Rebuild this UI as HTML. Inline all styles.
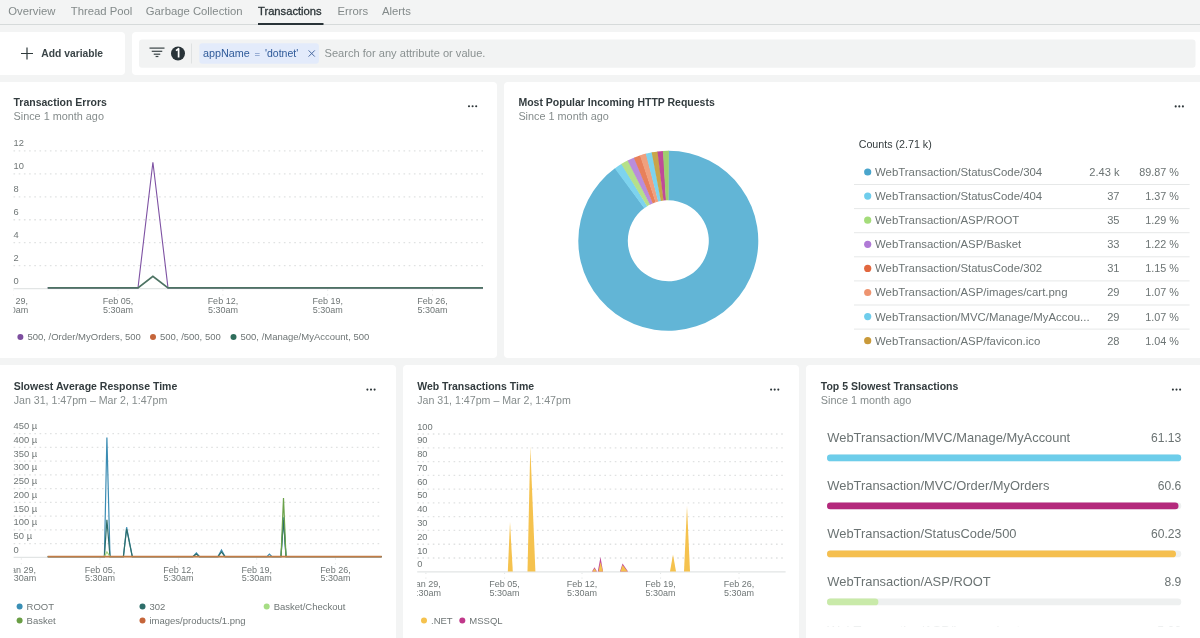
<!DOCTYPE html>
<html><head><meta charset="utf-8"><style>
html,body{margin:0;padding:0;width:1200px;height:638px;overflow:hidden;background:#f3f4f4;}
svg{display:block;font-family:"Liberation Sans", sans-serif;will-change:transform;}
</style></head><body>
<svg width="1200" height="638" viewBox="0 0 1200 638">
<rect x="0" y="0" width="1200" height="638" rx="0" fill="#f3f4f4" />
<text x="8.3" y="15.4" font-size="11.3" fill="#838a8a" text-anchor="start" >Overview</text>
<text x="70.8" y="15.4" font-size="11.3" fill="#838a8a" text-anchor="start" >Thread Pool</text>
<text x="145.8" y="15.4" font-size="11.3" fill="#838a8a" text-anchor="start" >Garbage Collection</text>
<text x="258" y="15.4" font-size="11.2" fill="#2c3538" text-anchor="start" stroke="#2c3538" stroke-width="0.3">Transactions</text>
<text x="337.5" y="15.4" font-size="11.3" fill="#838a8a" text-anchor="start" >Errors</text>
<text x="382" y="15.4" font-size="11.3" fill="#838a8a" text-anchor="start" >Alerts</text>
<rect x="0" y="24" width="1200" height="1" rx="0" fill="#d6dada" />
<rect x="258" y="23" width="65.5" height="2" rx="0" fill="#293338" />
<rect x="-5" y="32" width="130" height="43" rx="4" fill="#fff" />
<path d="M21 53.5H33M27 47.5V59.5" stroke="#2f3a3c" stroke-width="1.2" fill="none"/>
<text x="41.3" y="57" font-size="10.3" fill="#3b4548" font-weight="700" text-anchor="start" >Add variable</text>
<rect x="132" y="32" width="1075" height="43" rx="4" fill="#fff" />
<rect x="139" y="39.5" width="1056.5" height="28.3" rx="3" fill="#f2f3f3" />
<rect x="149.5" y="47.5" width="15" height="1.2" rx="0" fill="#3a4446" />
<rect x="151.75" y="50.699999999999996" width="10.5" height="1.2" rx="0" fill="#3a4446" />
<rect x="153.75" y="53.6" width="6.5" height="1.2" rx="0" fill="#3a4446" />
<rect x="155.6" y="55.9" width="2.8" height="1.2" rx="0" fill="#3a4446" />
<circle cx="178" cy="53.5" r="7" fill="#293338"/>
<path d="M176 50.6L178.6 48.7V57.6" stroke="#fff" stroke-width="1.7" fill="none" stroke-linejoin="round"/>
<rect x="191" y="43.5" width="1" height="20" rx="0" fill="#dfe2e2" />
<rect x="199.3" y="43.3" width="119.6" height="20.5" rx="3" fill="#e3ebfb" />
<text x="203" y="56.8" font-size="10.8" fill="#2f5a99" text-anchor="start" >appName</text>
<text x="254.6" y="56.5" font-size="9.6" fill="#5476b0" text-anchor="start" >=</text>
<text x="265" y="56.8" font-size="10.5" fill="#2f5a99" text-anchor="start" >'dotnet'</text>
<path d="M308.6 50.4L314.8 56.6M314.8 50.4L308.6 56.6" stroke="#4a6aa0" stroke-width="1" fill="none"/>
<text x="324.5" y="56.8" font-size="11.1" fill="#8a9191" text-anchor="start" >Search for any attribute or value.</text>
<rect x="-4" y="82" width="501" height="276" rx="4" fill="#fff" />
<rect x="504" y="82" width="700" height="276" rx="4" fill="#fff" />
<rect x="-4" y="365" width="400" height="280" rx="4" fill="#fff" />
<rect x="403" y="365" width="396" height="280" rx="4" fill="#fff" />
<rect x="806" y="365" width="400" height="280" rx="4" fill="#fff" />
<text x="13.5" y="106" font-size="10.5" fill="#333c3f" font-weight="700" text-anchor="start" >Transaction Errors</text>
<text x="13.5" y="120.2" font-size="10.85" fill="#858c8c" text-anchor="start" >Since 1 month ago</text>
<text x="518.4" y="106" font-size="10.5" fill="#333c3f" font-weight="700" text-anchor="start" >Most Popular Incoming HTTP Requests</text>
<text x="518.4" y="120.2" font-size="10.85" fill="#858c8c" text-anchor="start" >Since 1 month ago</text>
<text x="13.7" y="389.7" font-size="10.5" fill="#333c3f" font-weight="700" text-anchor="start" >Slowest Average Response Time</text>
<text x="13.7" y="403.9" font-size="10.64" fill="#858c8c" text-anchor="start" >Jan 31, 1:47pm – Mar 2, 1:47pm</text>
<text x="417.2" y="389.7" font-size="10.5" fill="#333c3f" font-weight="700" text-anchor="start" >Web Transactions Time</text>
<text x="417.2" y="403.9" font-size="10.64" fill="#858c8c" text-anchor="start" >Jan 31, 1:47pm – Mar 2, 1:47pm</text>
<text x="820.8" y="389.7" font-size="10.5" fill="#333c3f" font-weight="700" text-anchor="start" >Top 5 Slowest Transactions</text>
<text x="820.8" y="403.9" font-size="10.85" fill="#858c8c" text-anchor="start" >Since 1 month ago</text>
<circle cx="469.0" cy="106.2" r="1.05" fill="#2d3639"/>
<circle cx="472.6" cy="106.2" r="1.05" fill="#2d3639"/>
<circle cx="476.20000000000005" cy="106.2" r="1.05" fill="#2d3639"/>
<circle cx="1175.7" cy="106.4" r="1.05" fill="#2d3639"/>
<circle cx="1179.3" cy="106.4" r="1.05" fill="#2d3639"/>
<circle cx="1182.8999999999999" cy="106.4" r="1.05" fill="#2d3639"/>
<circle cx="367.4" cy="389.6" r="1.05" fill="#2d3639"/>
<circle cx="371" cy="389.6" r="1.05" fill="#2d3639"/>
<circle cx="374.6" cy="389.6" r="1.05" fill="#2d3639"/>
<circle cx="771.1" cy="389.6" r="1.05" fill="#2d3639"/>
<circle cx="774.7" cy="389.6" r="1.05" fill="#2d3639"/>
<circle cx="778.3000000000001" cy="389.6" r="1.05" fill="#2d3639"/>
<circle cx="1172.9" cy="389.6" r="1.05" fill="#2d3639"/>
<circle cx="1176.5" cy="389.6" r="1.05" fill="#2d3639"/>
<circle cx="1180.1" cy="389.6" r="1.05" fill="#2d3639"/>
<line x1="13.5" y1="150.9" x2="483" y2="150.9" stroke="#e0e2e2" stroke-width="1.3" stroke-dasharray="1.6 3.6"/>
<text x="13.5" y="146.4" font-size="9.3" fill="#6f7676" text-anchor="start" >12</text>
<line x1="13.5" y1="173.85000000000002" x2="483" y2="173.85000000000002" stroke="#e0e2e2" stroke-width="1.3" stroke-dasharray="1.6 3.6"/>
<text x="13.5" y="169.35000000000002" font-size="9.3" fill="#6f7676" text-anchor="start" >10</text>
<line x1="13.5" y1="196.8" x2="483" y2="196.8" stroke="#e0e2e2" stroke-width="1.3" stroke-dasharray="1.6 3.6"/>
<text x="13.5" y="192.3" font-size="9.3" fill="#6f7676" text-anchor="start" >8</text>
<line x1="13.5" y1="219.75" x2="483" y2="219.75" stroke="#e0e2e2" stroke-width="1.3" stroke-dasharray="1.6 3.6"/>
<text x="13.5" y="215.25" font-size="9.3" fill="#6f7676" text-anchor="start" >6</text>
<line x1="13.5" y1="242.70000000000002" x2="483" y2="242.70000000000002" stroke="#e0e2e2" stroke-width="1.3" stroke-dasharray="1.6 3.6"/>
<text x="13.5" y="238.20000000000002" font-size="9.3" fill="#6f7676" text-anchor="start" >4</text>
<line x1="13.5" y1="265.65000000000003" x2="483" y2="265.65000000000003" stroke="#e0e2e2" stroke-width="1.3" stroke-dasharray="1.6 3.6"/>
<text x="13.5" y="261.15000000000003" font-size="9.3" fill="#6f7676" text-anchor="start" >2</text>
<text x="13.5" y="284.1" font-size="9.3" fill="#6f7676" text-anchor="start" >0</text>
<line x1="13.5" y1="288.6" x2="483" y2="288.6" stroke="#e2e5e5" stroke-width="1.2"/>
<clipPath id="c13_288"><rect x="13.5" y="288.6" width="489.5" height="40"/></clipPath>
<g clip-path="url(#c13_288)">
<line x1="13.2" y1="289.6" x2="13.2" y2="295.6" stroke="#e3e5e5" stroke-width="1" stroke-dasharray="1.2 3.5"/>
<text x="13.2" y="303.70000000000005" font-size="9" fill="#6f7676" text-anchor="middle" >Jan 29,</text>
<text x="13.2" y="312.6" font-size="9" fill="#6f7676" text-anchor="middle" >5:30am</text>
<line x1="118" y1="289.6" x2="118" y2="295.6" stroke="#e3e5e5" stroke-width="1" stroke-dasharray="1.2 3.5"/>
<text x="118" y="303.70000000000005" font-size="9" fill="#6f7676" text-anchor="middle" >Feb 05,</text>
<text x="118" y="312.6" font-size="9" fill="#6f7676" text-anchor="middle" >5:30am</text>
<line x1="222.9" y1="289.6" x2="222.9" y2="295.6" stroke="#e3e5e5" stroke-width="1" stroke-dasharray="1.2 3.5"/>
<text x="222.9" y="303.70000000000005" font-size="9" fill="#6f7676" text-anchor="middle" >Feb 12,</text>
<text x="222.9" y="312.6" font-size="9" fill="#6f7676" text-anchor="middle" >5:30am</text>
<line x1="327.7" y1="289.6" x2="327.7" y2="295.6" stroke="#e3e5e5" stroke-width="1" stroke-dasharray="1.2 3.5"/>
<text x="327.7" y="303.70000000000005" font-size="9" fill="#6f7676" text-anchor="middle" >Feb 19,</text>
<text x="327.7" y="312.6" font-size="9" fill="#6f7676" text-anchor="middle" >5:30am</text>
<line x1="432.6" y1="289.6" x2="432.6" y2="295.6" stroke="#e3e5e5" stroke-width="1" stroke-dasharray="1.2 3.5"/>
<text x="432.6" y="303.70000000000005" font-size="9" fill="#6f7676" text-anchor="middle" >Feb 26,</text>
<text x="432.6" y="312.6" font-size="9" fill="#6f7676" text-anchor="middle" >5:30am</text>
</g>
<polyline points="47.7,287.9 138,287.9 152.9,162.3 168,287.9 483,287.9" fill="none" stroke="#7e52a3" stroke-width="1.1"/>
<polyline points="47.7,287.9 138,287.9 152.9,276.4 168,287.9 483,287.9" fill="none" stroke="#4d7363" stroke-width="1.8"/>
<circle cx="20.4" cy="336.9" r="3" fill="#7d4e9f"/>
<text x="27.4" y="340.2" font-size="9.5" fill="#6f7676" text-anchor="start" >500, /Order/MyOrders, 500</text>
<circle cx="153" cy="336.9" r="3" fill="#c5653a"/>
<text x="160" y="340.2" font-size="9.5" fill="#6f7676" text-anchor="start" >500, /500, 500</text>
<circle cx="233.5" cy="336.9" r="3" fill="#2f6e5c"/>
<text x="240.5" y="340.2" font-size="9.5" fill="#6f7676" text-anchor="start" >500, /Manage/MyAccount, 500</text>
<line x1="13.6" y1="433.7" x2="381.7" y2="433.7" stroke="#e0e2e2" stroke-width="1.3" stroke-dasharray="1.6 3.6"/>
<text x="13.6" y="429.2" font-size="9.4" fill="#6f7676" text-anchor="start" >450 µ</text>
<line x1="13.6" y1="447.44444444444446" x2="381.7" y2="447.44444444444446" stroke="#e0e2e2" stroke-width="1.3" stroke-dasharray="1.6 3.6"/>
<text x="13.6" y="442.94444444444446" font-size="9.4" fill="#6f7676" text-anchor="start" >400 µ</text>
<line x1="13.6" y1="461.18888888888887" x2="381.7" y2="461.18888888888887" stroke="#e0e2e2" stroke-width="1.3" stroke-dasharray="1.6 3.6"/>
<text x="13.6" y="456.68888888888887" font-size="9.4" fill="#6f7676" text-anchor="start" >350 µ</text>
<line x1="13.6" y1="474.93333333333334" x2="381.7" y2="474.93333333333334" stroke="#e0e2e2" stroke-width="1.3" stroke-dasharray="1.6 3.6"/>
<text x="13.6" y="470.43333333333334" font-size="9.4" fill="#6f7676" text-anchor="start" >300 µ</text>
<line x1="13.6" y1="488.67777777777775" x2="381.7" y2="488.67777777777775" stroke="#e0e2e2" stroke-width="1.3" stroke-dasharray="1.6 3.6"/>
<text x="13.6" y="484.17777777777775" font-size="9.4" fill="#6f7676" text-anchor="start" >250 µ</text>
<line x1="13.6" y1="502.4222222222222" x2="381.7" y2="502.4222222222222" stroke="#e0e2e2" stroke-width="1.3" stroke-dasharray="1.6 3.6"/>
<text x="13.6" y="497.9222222222222" font-size="9.4" fill="#6f7676" text-anchor="start" >200 µ</text>
<line x1="13.6" y1="516.1666666666666" x2="381.7" y2="516.1666666666666" stroke="#e0e2e2" stroke-width="1.3" stroke-dasharray="1.6 3.6"/>
<text x="13.6" y="511.66666666666663" font-size="9.4" fill="#6f7676" text-anchor="start" >150 µ</text>
<line x1="13.6" y1="529.911111111111" x2="381.7" y2="529.911111111111" stroke="#e0e2e2" stroke-width="1.3" stroke-dasharray="1.6 3.6"/>
<text x="13.6" y="525.411111111111" font-size="9.4" fill="#6f7676" text-anchor="start" >100 µ</text>
<line x1="13.6" y1="543.6555555555556" x2="381.7" y2="543.6555555555556" stroke="#e0e2e2" stroke-width="1.3" stroke-dasharray="1.6 3.6"/>
<text x="13.6" y="539.1555555555556" font-size="9.4" fill="#6f7676" text-anchor="start" >50 µ</text>
<text x="13.6" y="552.9" font-size="9.4" fill="#6f7676" text-anchor="start" >0</text>
<line x1="13.6" y1="557.4" x2="381.7" y2="557.4" stroke="#e2e5e5" stroke-width="1.2"/>
<clipPath id="c13_557"><rect x="13.6" y="557.4" width="388.09999999999997" height="40"/></clipPath>
<g clip-path="url(#c13_557)">
<line x1="21.3" y1="558.4" x2="21.3" y2="564.4" stroke="#e3e5e5" stroke-width="1" stroke-dasharray="1.2 3.5"/>
<text x="21.3" y="572.5" font-size="9" fill="#6f7676" text-anchor="middle" >Jan 29,</text>
<text x="21.3" y="581.4" font-size="9" fill="#6f7676" text-anchor="middle" >5:30am</text>
<line x1="100" y1="558.4" x2="100" y2="564.4" stroke="#e3e5e5" stroke-width="1" stroke-dasharray="1.2 3.5"/>
<text x="100" y="572.5" font-size="9" fill="#6f7676" text-anchor="middle" >Feb 05,</text>
<text x="100" y="581.4" font-size="9" fill="#6f7676" text-anchor="middle" >5:30am</text>
<line x1="178.6" y1="558.4" x2="178.6" y2="564.4" stroke="#e3e5e5" stroke-width="1" stroke-dasharray="1.2 3.5"/>
<text x="178.6" y="572.5" font-size="9" fill="#6f7676" text-anchor="middle" >Feb 12,</text>
<text x="178.6" y="581.4" font-size="9" fill="#6f7676" text-anchor="middle" >5:30am</text>
<line x1="256.7" y1="558.4" x2="256.7" y2="564.4" stroke="#e3e5e5" stroke-width="1" stroke-dasharray="1.2 3.5"/>
<text x="256.7" y="572.5" font-size="9" fill="#6f7676" text-anchor="middle" >Feb 19,</text>
<text x="256.7" y="581.4" font-size="9" fill="#6f7676" text-anchor="middle" >5:30am</text>
<line x1="335.4" y1="558.4" x2="335.4" y2="564.4" stroke="#e3e5e5" stroke-width="1" stroke-dasharray="1.2 3.5"/>
<text x="335.4" y="572.5" font-size="9" fill="#6f7676" text-anchor="middle" >Feb 26,</text>
<text x="335.4" y="581.4" font-size="9" fill="#6f7676" text-anchor="middle" >5:30am</text>
</g>
<polyline points="47.7,556.6 104.4,556.6 106.9,437.4 110,556.6 123.4,556.6 126.6,527.2 132.3,556.6 193,556.6 196.4,553 199.5,556.6 218,556.6 221.5,550 225,556.6 267,556.6 269.4,554 272,556.6 281,556.6 283.5,517.3 286,556.6 381.7,556.6" fill="none" stroke="#3b8cb3" stroke-width="1.2"/>
<polyline points="47.7,556.6 104.4,556.6 106.9,519.8 110,556.6 123.4,556.6 126.6,529 132.3,556.6 193,556.6 196.4,554 199.5,556.6 218,556.6 221.5,552 225,556.6 281,556.6 283.5,520 286,556.6 381.7,556.6" fill="none" stroke="#2e6e6a" stroke-width="1.2"/>
<polyline points="281,556.6 283.5,498.1 286,556.6" fill="none" stroke="#6aa24a" stroke-width="1.2"/>
<polyline points="104.4,556.6 106.9,552 110,556.6" fill="none" stroke="#a6d87f" stroke-width="1.2"/>
<polyline points="47.7,556.6 381.7,556.6" fill="none" stroke="#c27c45" stroke-width="1.8"/>
<circle cx="19.6" cy="606.6" r="3" fill="#3a8fb5"/>
<text x="26.6" y="609.9" font-size="9.5" fill="#6f7676" text-anchor="start" >ROOT</text>
<circle cx="142.5" cy="606.6" r="3" fill="#2e6e6a"/>
<text x="149.5" y="609.9" font-size="9.5" fill="#6f7676" text-anchor="start" >302</text>
<circle cx="266.7" cy="606.6" r="3" fill="#a6dd84"/>
<text x="273.7" y="609.9" font-size="9.5" fill="#6f7676" text-anchor="start" >Basket/Checkout</text>
<circle cx="19.6" cy="620.6" r="3" fill="#6a9e45"/>
<text x="26.6" y="623.9" font-size="9.5" fill="#6f7676" text-anchor="start" >Basket</text>
<circle cx="142.5" cy="620.6" r="3" fill="#c5653a"/>
<text x="149.5" y="623.9" font-size="9.5" fill="#6f7676" text-anchor="start" >images/products/1.png</text>
<line x1="417.2" y1="434.0" x2="785.6" y2="434.0" stroke="#e0e2e2" stroke-width="1.3" stroke-dasharray="1.6 3.6"/>
<text x="417.2" y="429.5" font-size="9.3" fill="#6f7676" text-anchor="start" >100</text>
<line x1="417.2" y1="447.78" x2="785.6" y2="447.78" stroke="#e0e2e2" stroke-width="1.3" stroke-dasharray="1.6 3.6"/>
<text x="417.2" y="443.28" font-size="9.3" fill="#6f7676" text-anchor="start" >90</text>
<line x1="417.2" y1="461.56" x2="785.6" y2="461.56" stroke="#e0e2e2" stroke-width="1.3" stroke-dasharray="1.6 3.6"/>
<text x="417.2" y="457.06" font-size="9.3" fill="#6f7676" text-anchor="start" >80</text>
<line x1="417.2" y1="475.34" x2="785.6" y2="475.34" stroke="#e0e2e2" stroke-width="1.3" stroke-dasharray="1.6 3.6"/>
<text x="417.2" y="470.84" font-size="9.3" fill="#6f7676" text-anchor="start" >70</text>
<line x1="417.2" y1="489.12" x2="785.6" y2="489.12" stroke="#e0e2e2" stroke-width="1.3" stroke-dasharray="1.6 3.6"/>
<text x="417.2" y="484.62" font-size="9.3" fill="#6f7676" text-anchor="start" >60</text>
<line x1="417.2" y1="502.9" x2="785.6" y2="502.9" stroke="#e0e2e2" stroke-width="1.3" stroke-dasharray="1.6 3.6"/>
<text x="417.2" y="498.4" font-size="9.3" fill="#6f7676" text-anchor="start" >50</text>
<line x1="417.2" y1="516.68" x2="785.6" y2="516.68" stroke="#e0e2e2" stroke-width="1.3" stroke-dasharray="1.6 3.6"/>
<text x="417.2" y="512.18" font-size="9.3" fill="#6f7676" text-anchor="start" >40</text>
<line x1="417.2" y1="530.4599999999999" x2="785.6" y2="530.4599999999999" stroke="#e0e2e2" stroke-width="1.3" stroke-dasharray="1.6 3.6"/>
<text x="417.2" y="525.9599999999999" font-size="9.3" fill="#6f7676" text-anchor="start" >30</text>
<line x1="417.2" y1="544.24" x2="785.6" y2="544.24" stroke="#e0e2e2" stroke-width="1.3" stroke-dasharray="1.6 3.6"/>
<text x="417.2" y="539.74" font-size="9.3" fill="#6f7676" text-anchor="start" >20</text>
<line x1="417.2" y1="558.02" x2="785.6" y2="558.02" stroke="#e0e2e2" stroke-width="1.3" stroke-dasharray="1.6 3.6"/>
<text x="417.2" y="553.52" font-size="9.3" fill="#6f7676" text-anchor="start" >10</text>
<text x="417.2" y="567.3" font-size="9.3" fill="#6f7676" text-anchor="start" >0</text>
<line x1="417.2" y1="571.8" x2="785.6" y2="571.8" stroke="#e2e5e5" stroke-width="1.2"/>
<clipPath id="c417_571"><rect x="417.2" y="571.8" width="388.40000000000003" height="40"/></clipPath>
<g clip-path="url(#c417_571)">
<line x1="425.90000000000003" y1="572.8" x2="425.90000000000003" y2="578.8" stroke="#e3e5e5" stroke-width="1" stroke-dasharray="1.2 3.5"/>
<text x="425.90000000000003" y="586.9" font-size="9" fill="#6f7676" text-anchor="middle" >Jan 29,</text>
<text x="425.90000000000003" y="595.8" font-size="9" fill="#6f7676" text-anchor="middle" >5:30am</text>
<line x1="504.6" y1="572.8" x2="504.6" y2="578.8" stroke="#e3e5e5" stroke-width="1" stroke-dasharray="1.2 3.5"/>
<text x="504.6" y="586.9" font-size="9" fill="#6f7676" text-anchor="middle" >Feb 05,</text>
<text x="504.6" y="595.8" font-size="9" fill="#6f7676" text-anchor="middle" >5:30am</text>
<line x1="582" y1="572.8" x2="582" y2="578.8" stroke="#e3e5e5" stroke-width="1" stroke-dasharray="1.2 3.5"/>
<text x="582" y="586.9" font-size="9" fill="#6f7676" text-anchor="middle" >Feb 12,</text>
<text x="582" y="595.8" font-size="9" fill="#6f7676" text-anchor="middle" >5:30am</text>
<line x1="660.6" y1="572.8" x2="660.6" y2="578.8" stroke="#e3e5e5" stroke-width="1" stroke-dasharray="1.2 3.5"/>
<text x="660.6" y="586.9" font-size="9" fill="#6f7676" text-anchor="middle" >Feb 19,</text>
<text x="660.6" y="595.8" font-size="9" fill="#6f7676" text-anchor="middle" >5:30am</text>
<line x1="739" y1="572.8" x2="739" y2="578.8" stroke="#e3e5e5" stroke-width="1" stroke-dasharray="1.2 3.5"/>
<text x="739" y="586.9" font-size="9" fill="#6f7676" text-anchor="middle" >Feb 26,</text>
<text x="739" y="595.8" font-size="9" fill="#6f7676" text-anchor="middle" >5:30am</text>
</g>
<path d="M507.8 571.6L510 522L512.8 571.6Z" fill="#f5c24e"/>
<path d="M527.5 571.6L530.3 446.8L535.4 571.6Z" fill="#f5c24e"/>
<path d="M592 571.6L594.5 567.2L597 571.6Z" fill="#c04a98"/>
<path d="M592.5 571.6L594.5 568.5L596.5 571.6Z" fill="#f5c24e"/>
<path d="M597.8 571.6L600.5 557L603 571.6Z" fill="#c04a98"/>
<path d="M598.5 571.6L600.5 562L603 571.6Z" fill="#f5c24e"/>
<path d="M620 571.6L622.5 563.5L628 571.6Z" fill="#c04a98"/>
<path d="M620.5 571.6L622.5 565L627.5 571.6Z" fill="#f5c24e"/>
<path d="M670 571.6L673 554.5L676 571.6Z" fill="#f5c24e"/>
<path d="M684 571.6L687 506L690 571.6Z" fill="#f5c24e"/>
<circle cx="424" cy="620.6" r="3" fill="#f5c24e"/>
<text x="431" y="623.9" font-size="9.5" fill="#6f7676" text-anchor="start" >.NET</text>
<circle cx="462.3" cy="620.6" r="3" fill="#c0388a"/>
<text x="469.3" y="623.9" font-size="9.5" fill="#6f7676" text-anchor="start" >MSSQL</text>
<path d="M668.30 150.80A90 90 0 1 1 615.24 168.10L644.42 208.09A40.5 40.5 0 1 0 668.30 200.30Z" fill="#62b5d6"/>
<path d="M614.81 168.42A90 90 0 0 1 621.69 163.81L647.32 206.15A40.5 40.5 0 0 0 644.23 208.23Z" fill="#7dd3ee"/>
<path d="M621.23 164.09A90 90 0 0 1 628.07 160.29L650.20 204.57A40.5 40.5 0 0 0 647.12 206.28Z" fill="#b5e08a"/>
<path d="M627.59 160.53A90 90 0 0 1 634.36 157.45L653.03 203.29A40.5 40.5 0 0 0 649.98 204.68Z" fill="#b98ddb"/>
<path d="M633.86 157.65A90 90 0 0 1 640.46 155.21L655.77 202.29A40.5 40.5 0 0 0 652.80 203.38Z" fill="#e8805a"/>
<path d="M639.95 155.38A90 90 0 0 1 646.28 153.54L658.39 201.53A40.5 40.5 0 0 0 655.54 202.36Z" fill="#f0a07e"/>
<path d="M645.75 153.67A90 90 0 0 1 652.19 152.25L661.05 200.95A40.5 40.5 0 0 0 658.15 201.59Z" fill="#7dd3ee"/>
<path d="M651.66 152.35A90 90 0 0 1 658.01 151.39L663.67 200.57A40.5 40.5 0 0 0 660.81 201.00Z" fill="#c9a54a"/>
<path d="M657.47 151.45A90 90 0 0 1 663.41 150.93L666.10 200.36A40.5 40.5 0 0 0 663.43 200.59Z" fill="#c04a98"/>
<path d="M662.87 150.96A90 90 0 0 1 668.84 150.80L668.54 200.30A40.5 40.5 0 0 0 665.86 200.37Z" fill="#9fcf6e"/>
<text x="858.7" y="147.9" font-size="10.7" fill="#353d3f" text-anchor="start" >Counts (2.71 k)</text>
<clipPath id="tblclip"><rect x="850" y="150" width="350" height="195.5"/></clipPath><g clip-path="url(#tblclip)">
<circle cx="867.7" cy="172.0" r="3.6" fill="#4aa5cc"/>
<text x="875" y="175.9" font-size="11.4" fill="#6b7373" text-anchor="start" >WebTransaction/StatusCode/304</text>
<text x="1119.5" y="175.9" font-size="11.1" fill="#6b7373" text-anchor="end" >2.43 k</text>
<text x="1178.8" y="175.9" font-size="10.8" fill="#6b7373" text-anchor="end" >89.87 %</text>
<rect x="854" y="184.0" width="335.6" height="1" rx="0" fill="#e6e8e8" />
<circle cx="867.7" cy="196.1" r="3.6" fill="#6fcdec"/>
<text x="875" y="200.0" font-size="11.4" fill="#6b7373" text-anchor="start" >WebTransaction/StatusCode/404</text>
<text x="1119.5" y="200.0" font-size="11.1" fill="#6b7373" text-anchor="end" >37</text>
<text x="1178.8" y="200.0" font-size="10.8" fill="#6b7373" text-anchor="end" >1.37 %</text>
<rect x="854" y="208.1" width="335.6" height="1" rx="0" fill="#e6e8e8" />
<circle cx="867.7" cy="220.20000000000002" r="3.6" fill="#a4dc7a"/>
<text x="875" y="224.10000000000002" font-size="11.4" fill="#6b7373" text-anchor="start" >WebTransaction/ASP/ROOT</text>
<text x="1119.5" y="224.10000000000002" font-size="11.1" fill="#6b7373" text-anchor="end" >35</text>
<text x="1178.8" y="224.10000000000002" font-size="10.8" fill="#6b7373" text-anchor="end" >1.29 %</text>
<rect x="854" y="232.20000000000002" width="335.6" height="1" rx="0" fill="#e6e8e8" />
<circle cx="867.7" cy="244.3" r="3.6" fill="#b07ad6"/>
<text x="875" y="248.20000000000002" font-size="11.4" fill="#6b7373" text-anchor="start" >WebTransaction/ASP/Basket</text>
<text x="1119.5" y="248.20000000000002" font-size="11.1" fill="#6b7373" text-anchor="end" >33</text>
<text x="1178.8" y="248.20000000000002" font-size="10.8" fill="#6b7373" text-anchor="end" >1.22 %</text>
<rect x="854" y="256.3" width="335.6" height="1" rx="0" fill="#e6e8e8" />
<circle cx="867.7" cy="268.40000000000003" r="3.6" fill="#e2683f"/>
<text x="875" y="272.3" font-size="11.4" fill="#6b7373" text-anchor="start" >WebTransaction/StatusCode/302</text>
<text x="1119.5" y="272.3" font-size="11.1" fill="#6b7373" text-anchor="end" >31</text>
<text x="1178.8" y="272.3" font-size="10.8" fill="#6b7373" text-anchor="end" >1.15 %</text>
<rect x="854" y="280.40000000000003" width="335.6" height="1" rx="0" fill="#e6e8e8" />
<circle cx="867.7" cy="292.5" r="3.6" fill="#ee9470"/>
<text x="875" y="296.4" font-size="11.4" fill="#6b7373" text-anchor="start" >WebTransaction/ASP/images/cart.png</text>
<text x="1119.5" y="296.4" font-size="11.1" fill="#6b7373" text-anchor="end" >29</text>
<text x="1178.8" y="296.4" font-size="10.8" fill="#6b7373" text-anchor="end" >1.07 %</text>
<rect x="854" y="304.5" width="335.6" height="1" rx="0" fill="#e6e8e8" />
<circle cx="867.7" cy="316.6" r="3.6" fill="#6fcdec"/>
<text x="875" y="320.5" font-size="11.4" fill="#6b7373" text-anchor="start" >WebTransaction/MVC/Manage/MyAccou...</text>
<text x="1119.5" y="320.5" font-size="11.1" fill="#6b7373" text-anchor="end" >29</text>
<text x="1178.8" y="320.5" font-size="10.8" fill="#6b7373" text-anchor="end" >1.07 %</text>
<rect x="854" y="328.6" width="335.6" height="1" rx="0" fill="#e6e8e8" />
<circle cx="867.7" cy="340.70000000000005" r="3.6" fill="#c99a3a"/>
<text x="875" y="344.6" font-size="11.4" fill="#6b7373" text-anchor="start" >WebTransaction/ASP/favicon.ico</text>
<text x="1119.5" y="344.6" font-size="11.1" fill="#6b7373" text-anchor="end" >28</text>
<text x="1178.8" y="344.6" font-size="10.8" fill="#6b7373" text-anchor="end" >1.04 %</text>
</g>
<text x="827.3" y="442" font-size="12.9" fill="#6b7373" text-anchor="start" >WebTransaction/MVC/Manage/MyAccount</text>
<text x="1181.3" y="442" font-size="12.1" fill="#6b7373" text-anchor="end" >61.13</text>
<rect x="827" y="454.5" width="354.3" height="6.8" rx="3.4" fill="#eef0f0" />
<rect x="827" y="454.5" width="354.20000000000005" height="6.8" rx="3.4" fill="#6dcdea" />
<text x="827.3" y="490" font-size="12.9" fill="#6b7373" text-anchor="start" >WebTransaction/MVC/Order/MyOrders</text>
<text x="1181.3" y="490" font-size="12.1" fill="#6b7373" text-anchor="end" >60.6</text>
<rect x="827" y="502.5" width="354.3" height="6.8" rx="3.4" fill="#eef0f0" />
<rect x="827" y="502.5" width="351.5" height="6.8" rx="3.4" fill="#b4297c" />
<text x="827.3" y="538" font-size="12.9" fill="#6b7373" text-anchor="start" >WebTransaction/StatusCode/500</text>
<text x="1181.3" y="538" font-size="12.1" fill="#6b7373" text-anchor="end" >60.23</text>
<rect x="827" y="550.5" width="354.3" height="6.8" rx="3.4" fill="#eef0f0" />
<rect x="827" y="550.5" width="349" height="6.8" rx="3.4" fill="#f5bf4f" />
<text x="827.3" y="586" font-size="12.9" fill="#6b7373" text-anchor="start" >WebTransaction/ASP/ROOT</text>
<text x="1181.3" y="586" font-size="12.1" fill="#6b7373" text-anchor="end" >8.9</text>
<rect x="827" y="598.5" width="354.3" height="6.8" rx="3.4" fill="#eef0f0" />
<rect x="827" y="598.5" width="51.39999999999998" height="6.8" rx="3.4" fill="#c9eaa9" />
<clipPath id="fade"><rect x="800" y="600" width="400" height="27"/></clipPath><g clip-path="url(#fade)">
<text x="827.3" y="634.5" font-size="12.9" fill="#eef0f0" text-anchor="start" >WebTransaction/ASP/images/cart.png</text>
<text x="1181.3" y="634.5" font-size="12.4" fill="#eef0f0" text-anchor="end" >5.00</text>
</g>
</svg>
</body></html>
